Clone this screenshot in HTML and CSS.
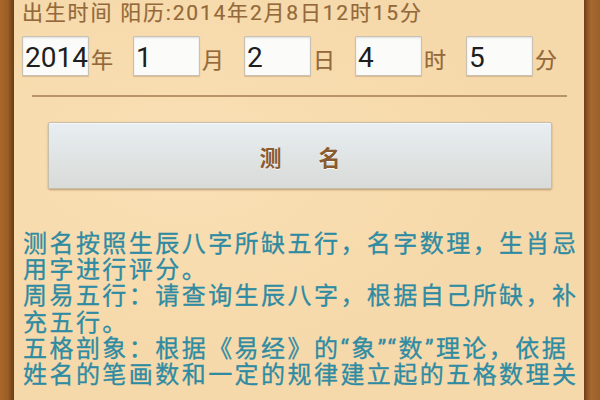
FILE: index.html
```html
<!DOCTYPE html>
<html lang="zh-CN">
<head>
<meta charset="utf-8">
<title>测名</title>
<link rel="stylesheet" href="styles.css">
</head>
<body>
<div class="frame">
  <div class="edge edge-left"></div>
  <main class="content">
    <div class="birth">出生时间 阳历:2014年2月8日12时15分</div>
    <div class="fields">
      <div class="field"><input class="box" type="text" value="2014"><span class="unit">年</span></div>
      <div class="field"><input class="box" type="text" value="1"><span class="unit">月</span></div>
      <div class="field"><input class="box" type="text" value="2"><span class="unit">日</span></div>
      <div class="field"><input class="box" type="text" value="4"><span class="unit">时</span></div>
      <div class="field"><input class="box" type="text" value="5"><span class="unit">分</span></div>
    </div>
    <hr class="divider">
    <button class="test-btn" type="button"><span>测</span><span>名</span></button>
    <div class="desc">
      <div class="line">测名按照生辰八字所缺五行，名字数理，生肖忌</div>
      <div class="line">用字进行评分。</div>
      <div class="line">周易五行：请查询生辰八字，根据自己所缺，补</div>
      <div class="line">充五行。</div>
      <div class="line">五格剖象：根据《易经》的“象”“数”理论，依据</div>
      <div class="line">姓名的笔画数和一定的规律建立起的五格数理关</div>
    </div>
  </main>
  <div class="edge edge-right"></div>
</div>
</body>
</html>
```
FILE: styles.css
```css
html, body {
  margin: 0;
  padding: 0;
  width: 600px;
  height: 400px;
  overflow: hidden;
}

body {
  font-family: Roboto, "Noto Sans CJK SC", sans-serif;
  background: #f5d8a8;
}

.frame {
  display: flex;
  width: 600px;
  height: 400px;
}

.edge {
  flex: none;
}

.edge-left {
  width: 14px;
  background: linear-gradient(to right, #a8682c 0%, #9c5e26 55%, #7e4a1c 80%, #6a3c16 100%);
}

.edge-right {
  width: 16px;
  background: linear-gradient(to right, #6a3c16 0%, #8a5222 18%, #a66a30 45%, #9a5e28 100%);
}

.content {
  flex: 1;
  min-width: 0;
  overflow: hidden;
  background:
    radial-gradient(ellipse at 30% 40%, rgba(255, 235, 200, 0.35), rgba(255, 235, 200, 0) 60%),
    #f6d9aa;
  display: flex;
  flex-direction: column;
}

.birth {
  padding-left: 8px;
  font-size: 21px;
  letter-spacing: 1.8px;
  line-height: 26px;
  color: #93693a;
  white-space: nowrap;
  -webkit-text-stroke: 0.2px #93693a;
}

.fields {
  display: flex;
  gap: 20px;
  margin-top: 10px;
  padding-left: 8px;
}

.field {
  display: flex;
  align-items: center;
}

.box {
  box-sizing: border-box;
  width: 67px;
  height: 40px;
  margin: 0;
  padding: 2px 0 0 2px;
  border: 1px solid #c9c2b4;
  border-radius: 1px;
  background: #fbfbf9;
  box-shadow: inset 0 1px 2px rgba(0, 0, 0, 0.12), 0 1px 1px rgba(120, 80, 40, 0.25);
  font-family: Roboto, sans-serif;
  font-size: 28px;
  color: #1e1e1e;
  outline: none;
}

.unit {
  width: 22px;
  margin-left: 2px;
  padding-top: 4px;
  font-size: 22px;
  color: #93693a;
  -webkit-text-stroke: 0.2px #93693a;
}

.divider {
  margin: 19px 17px 0 18px;
  border: 0;
  height: 2px;
  background: #b89466;
}

.test-btn {
  margin: 25px 32px 0 34px;
  height: 67px;
  padding: 0;
  display: flex;
  justify-content: center;
  align-items: center;
  gap: 37px;
  border: 1px solid #c6bfae;
  border-radius: 2px;
  background: linear-gradient(to bottom, #e8eef2 0%, #e0e4e4 50%, #d8dbd8 100%);
  box-shadow: 0 1px 2px rgba(110, 70, 30, 0.45), inset 0 1px 0 #f4f6f8;
  font-family: "Noto Sans CJK SC", sans-serif;
  font-size: 22px;
  font-weight: bold;
  color: #8a5a30;
  text-shadow: 0 1px 0 rgba(255, 255, 255, 0.8);
}

.desc {
  margin-top: 42px;
  padding-left: 9px;
  color: #2f8ba2;
  font-size: 24px;
  letter-spacing: 2.45px;
  line-height: 26.2px;
  -webkit-text-stroke: 0.3px #2f8ba2;
}

.line {
  white-space: nowrap;
}
```
